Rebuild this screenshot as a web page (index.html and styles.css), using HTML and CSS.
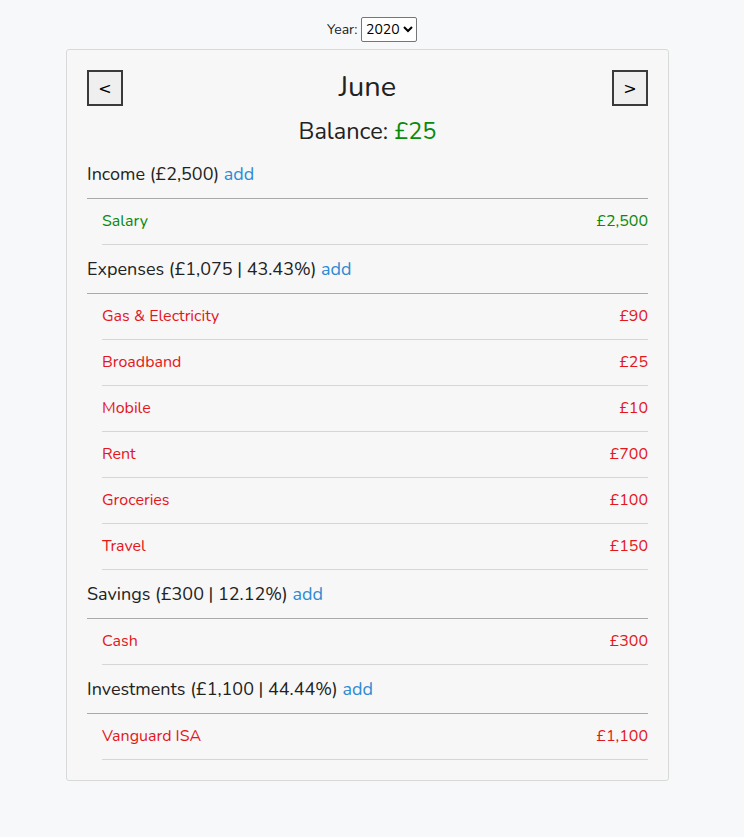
FILE: index.html
```html
<!DOCTYPE html>
<html>
<head>
<meta charset="utf-8">
<link rel="stylesheet" href="styles.css">
</head>
<body>
<div class="year-bar">
  <label class="year-label">Year: <select class="year-select"><option>2020</option></select></label>
</div>
<div class="card">
  <div class="nav">
    <button class="nav-btn">&lt;</button>
    <div class="month">June</div>
    <button class="nav-btn">&gt;</button>
  </div>
  <div class="balance">Balance: <span class="pos">£25</span></div>

  <div class="section-head">Income (£2,500) <a class="add">add</a></div>
  <ul class="items">
    <li class="item income"><span>Salary</span><span>£2,500</span></li>
  </ul>

  <div class="section-head">Expenses (£1,075 | 43.43%) <a class="add">add</a></div>
  <ul class="items">
    <li class="item"><span>Gas &amp; Electricity</span><span>£90</span></li>
    <li class="item"><span>Broadband</span><span>£25</span></li>
    <li class="item"><span>Mobile</span><span>£10</span></li>
    <li class="item"><span>Rent</span><span>£700</span></li>
    <li class="item"><span>Groceries</span><span>£100</span></li>
    <li class="item"><span>Travel</span><span>£150</span></li>
  </ul>

  <div class="section-head">Savings (£300 | 12.12%) <a class="add">add</a></div>
  <ul class="items">
    <li class="item"><span>Cash</span><span>£300</span></li>
  </ul>

  <div class="section-head">Investments (£1,100 | 44.44%) <a class="add">add</a></div>
  <ul class="items">
    <li class="item"><span>Vanguard ISA</span><span>£1,100</span></li>
  </ul>
</div>
</body>
</html>
```
FILE: styles.css
```css
body {
  margin: 0;
  background: #f7f8fa;
  font-family: "Nunito", "Lato", "Open Sans", sans-serif;
  color: #222;
}
.year-bar {
  text-align: center;
  padding-top: 17px;
  height: 32px;
  font-size: 14px;
}
.year-label { color: #222; }
.year-select {
  font-family: inherit;
  font-size: 14px;
  padding: 1px 0;
  border: 1px solid #767676;
  border-radius: 2px;
  background: #fff;
  color: #000;
}
.card {
  width: 561px;
  margin: 0 0 0 66px;
  background: #f7f7f7;
  border: 1px solid #d9d9d9;
  border-radius: 3px;
  padding: 20px 20px 20px 20px;
}
.nav {
  display: flex;
  justify-content: space-between;
  align-items: center;
  height: 36px;
}
.nav-btn {
  width: 36px;
  height: 36px;
  background: #efefef;
  border: 2px solid #3a3a3a;
  border-radius: 0;
  font-family: "DejaVu Sans", sans-serif;
  font-size: 16px;
  color: #000;
  padding: 0;
}
.month {
  font-size: 29px;
  color: #222;
  margin-top: -3px;
}
.balance {
  text-align: center;
  font-size: 23.5px;
  margin-top: 11px;
  line-height: 28px;
  margin-bottom: 5px;
}
.pos { color: #0a8a0a; }
.section-head {
  font-size: 18px;
  height: 48px;
  line-height: 48px;
  border-bottom: 1px solid #aaa;
}
.add { color: #2f8ad4; cursor: pointer; }
.items {
  list-style: none;
  margin: 0;
  padding: 0 0 0 15px;
}
.item {
  display: flex;
  justify-content: space-between;
  height: 45px;
  line-height: 44px;
  border-bottom: 1px solid #d6d6d6;
  font-size: 16px;
  color: #e3161b;
}
.item.income { color: #0a8a0a; }
```
